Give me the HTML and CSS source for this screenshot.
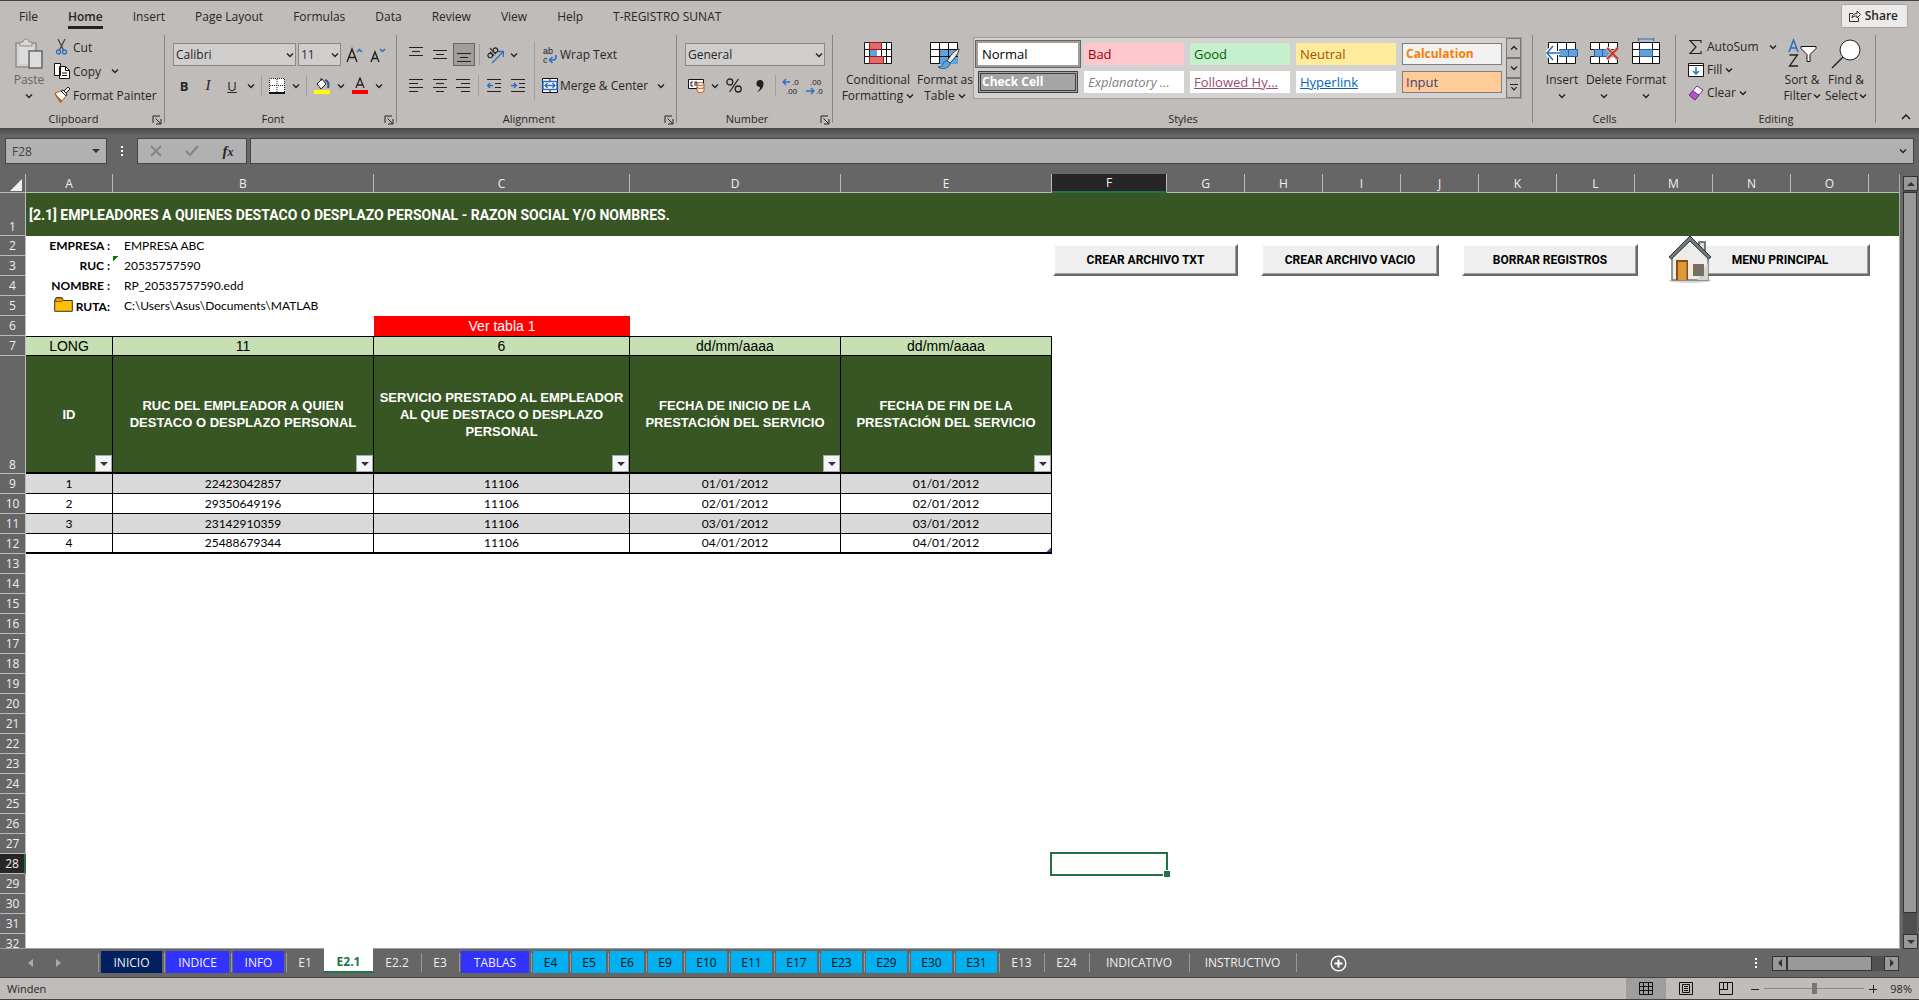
FILE: index.html
```html
<!DOCTYPE html>
<html lang="es">
<head>
    <meta charset="UTF-8">
    <meta name="viewport" content="width=device-width, initial-scale=1.0">
    <title>T-REGISTRO SUNAT</title>
    <link rel="stylesheet" href="styles.css">
</head>
<body>
    <svg class="defs" aria-hidden="true">
        <symbol id="chev" viewBox="0 0 8 8"><path d="M1 2.500l3 3 3-3" fill="none" stroke="#222" stroke-width="1.400"/></symbol>
        <symbol id="launch" viewBox="0 0 10 10"><path d="M1 8V1h7M3.500 3.500L8.500 8.500M9 4v5H4" fill="none" stroke="#222"/></symbol>
        <symbol id="tri" viewBox="0 0 8 8"><path d="M0 2h8L4 6z" fill="#333"/></symbol>
    </svg>

    <header class="ribbon">
        <!-- Pestañas -->
        <nav class="menu">
            <button>File</button>
            <button class="activo">Home</button>
            <button>Insert</button>
            <button>Page Layout</button>
            <button>Formulas</button>
            <button>Data</button>
            <button>Review</button>
            <button>View</button>
            <button>Help</button>
            <button>T-REGISTRO SUNAT</button>
            <button class="share"><svg width="12" height="12" viewBox="0 0 12 12" fill="none" stroke="#333"><path d="M4 3.500H.5v8h9V8M3 8c0-3 2-4.500 5-4.500V1l3.500 3.500L8 8V6C6 6 4 6 3 8z"/></svg>Share</button>
        </nav>

        <!-- Grupos de comandos -->
        <div class="grupos">
            <section class="grupo g-clipboard">
                <div class="cuerpo">
                    <button class="grande paste">
                        <svg width="30" height="34" viewBox="0 0 30 34"><path d="M2 5h20v24H2z" fill="#d2d0ce" stroke="#8f8f8f" stroke-width="1.500"/><path d="M5 8h14v18H5z" fill="#dedcda"/><path d="M6 4h3c0-4 6-4 6 0h3v4H6z" fill="#d8d8d8" stroke="#8f8f8f"/><path d="M15 13h13v17H15z" fill="#dcdcdc" stroke="#666" stroke-width="1.500"/></svg>
                        <span>Paste</span>
                        <svg class="chev"><use href="#chev"/></svg>
                    </button>
                    <div class="lista">
                        <button><svg width="16" height="16" viewBox="0 0 16 16" fill="none"><path d="M4 0l5.500 11M11 0L5.500 11" stroke="#444" stroke-width="1.300"/><circle cx="4.500" cy="13" r="2" stroke="#2b6cc4" stroke-width="1.300"/><circle cx="10.500" cy="13" r="2" stroke="#2b6cc4" stroke-width="1.300"/></svg>Cut</button>
                        <button><svg width="16" height="16" viewBox="0 0 16 16" fill="#fff" stroke="#111"><path d="M.5.5h6v12h-6zM5.500 3.500h6l4 4v8h-10z"/><path d="M11.500 3.500v4h4M8 10h5M8 12.500h5" fill="none"/></svg>Copy<svg class="chev ml"><use href="#chev"/></svg></button>
                        <button><svg width="16" height="16" viewBox="0 0 16 16"><path d="M1 6l6-2 5 5-5 6z" fill="#fff" stroke="#b65a1a"/><path d="M1 7l7 7-1.500 1.500z" fill="#c96a1e" stroke="#b65a1a"/><path d="M7 4l2-1 4 4-1 2zM10 4l4-4 2 2-4 4" fill="#eee" stroke="#222"/></svg>Format Painter</button>
                    </div>
                </div>
                <h2>Clipboard</h2><svg class="launch"><use href="#launch"/></svg>
            </section>

            <section class="grupo g-font">
                <div class="cuerpo filas">
                    <div class="fila">
                        <label class="combo fuente"><select aria-label="Font"><option>Calibri</option></select><svg class="chev"><use href="#chev"/></svg></label>
                        <label class="combo tam"><select aria-label="Font size"><option>11</option></select><svg class="chev"><use href="#chev"/></svg></label>
                        <button class="tool" aria-label="Increase font size"><svg width="18" height="16" viewBox="0 0 18 16" fill="none"><path d="M2 15L7 2l5 13M3.800 10.500h6.400" stroke="#222" stroke-width="1.400"/><path d="M12 5l2.500-2.500L17 5" stroke="#2b6cc4" stroke-width="1.500"/></svg></button>
                        <button class="tool" aria-label="Decrease font size"><svg width="18" height="16" viewBox="0 0 18 16" fill="none"><path d="M2 15L6 5l4 10M3.500 11.500h5" stroke="#222" stroke-width="1.400"/><path d="M11 2l2.500 2.500L16 2" stroke="#2b6cc4" stroke-width="1.500"/></svg></button>
                    </div>
                    <div class="fila">
                        <button class="tool"><b>B</b></button>
                        <button class="tool"><i>I</i></button>
                        <button class="tool"><u>U</u></button>
                        <svg class="chev"><use href="#chev"/></svg>
                        <span class="sep"></span>
                        <button class="tool" aria-label="Borders"><svg width="16" height="16" viewBox="0 0 16 16"><path d="M.5.5h15v15H.5z" fill="#fff"/><path d="M.5 15V.5h15V15M8 1v14M1 7.500h14" fill="none" stroke="#222" stroke-dasharray="1 1"/><path d="M0 15h16" stroke="#111" stroke-width="2"/></svg></button>
                        <svg class="chev"><use href="#chev"/></svg>
                        <span class="sep"></span>
                        <button class="tool" aria-label="Fill color"><svg width="16" height="17" viewBox="0 0 16 17"><path d="M7 1v3M3 7l5-5 4 5-5 5z" fill="#fff" stroke="#222"/><path d="M11 3c3 1 4 4 3 8" fill="none" stroke="#2b4f9a" stroke-width="2"/><path d="M0 13h16v4H0z" fill="#ff0"/></svg></button>
                        <svg class="chev"><use href="#chev"/></svg>
                        <button class="tool" aria-label="Font color"><svg width="16" height="17" viewBox="0 0 16 17"><path d="M4 11L8 1l4 10M5.300 8h5.400" fill="none" stroke="#222" stroke-width="1.300"/><path d="M0 13h16v4H0z" fill="#f00"/></svg></button>
                        <svg class="chev"><use href="#chev"/></svg>
                    </div>
                </div>
                <h2>Font</h2><svg class="launch"><use href="#launch"/></svg>
            </section>

            <section class="grupo g-align">
                <div class="cuerpo dividido">
                    <div class="filas">
                        <div class="fila">
                            <button class="tool" aria-label="Top align"><svg width="14" height="17" viewBox="0 0 14 17" stroke="#222"><path d="M0 1.500h14M3 5.500h8M0 9.500h14"/></svg></button>
                            <button class="tool" aria-label="Middle align"><svg width="14" height="17" viewBox="0 0 14 17" stroke="#222"><path d="M0 4.500h14M3 8.500h8M0 12.500h14"/></svg></button>
                            <button class="tool marcado" aria-label="Bottom align"><svg width="14" height="17" viewBox="0 0 14 17" stroke="#222"><path d="M0 7.500h14M3 11.500h8M0 15.500h14"/></svg></button>
                            <span class="sep"></span>
                            <button class="tool" aria-label="Orientation"><svg width="18" height="18" viewBox="0 0 18 18" fill="none"><g transform="rotate(-45 6 7)" stroke="#222" stroke-width="1.200"><circle cx="3" cy="7.500" r="2.300"/><path d="M5.500 5v5.500M8 2v8.500"/><circle cx="10.300" cy="7.500" r="2.300"/></g><path d="M6 17L17 6M12 5.500h5.500V11" stroke="#2b6cc4" stroke-width="1.300"/></svg></button>
                            <svg class="chev"><use href="#chev"/></svg>
                        </div>
                        <div class="fila">
                            <button class="tool" aria-label="Align left"><svg width="14" height="14" viewBox="0 0 14 14" stroke="#222"><path d="M0 .5h14M0 4.500h9M0 8.500h14M0 12.500h9"/></svg></button>
                            <button class="tool" aria-label="Center"><svg width="14" height="14" viewBox="0 0 14 14" stroke="#222"><path d="M0 .5h14M3 4.500h8M0 8.500h14M3 12.500h8"/></svg></button>
                            <button class="tool" aria-label="Align right"><svg width="14" height="14" viewBox="0 0 14 14" stroke="#222"><path d="M0 .5h14M5 4.500h9M0 8.500h14M5 12.500h9"/></svg></button>
                            <span class="sep"></span>
                            <button class="tool" aria-label="Decrease indent"><svg width="14" height="14" viewBox="0 0 14 14" fill="none" stroke="#222"><path d="M0 .5h14M8 4.500h6M8 8.500h6M0 12.500h14"/><path d="M6 6.500H1M3 4L.7 6.500 3 9" stroke="#2b6cc4" stroke-width="1.400"/></svg></button>
                            <button class="tool" aria-label="Increase indent"><svg width="14" height="14" viewBox="0 0 14 14" fill="none" stroke="#222"><path d="M0 .5h14M8 4.500h6M8 8.500h6M0 12.500h14"/><path d="M0 6.500h5M3 4l2.300 2.500L3 9" stroke="#2b6cc4" stroke-width="1.400"/></svg></button>
                        </div>
                    </div>
                    <div class="filas texto">
                        <button class="fila"><svg width="16" height="18" viewBox="0 0 16 18"><text x="1" y="8" font-size="9" fill="#222">ab</text><text x="1" y="17" font-size="9" fill="#222">c</text><path d="M14 9v2c0 2-1 3-3 3H8M10.500 11L7.500 14l3 3" fill="none" stroke="#2b6cc4" stroke-width="1.500"/></svg>Wrap Text</button>
                        <button class="fila"><svg width="16" height="16" viewBox="0 0 16 16"><path d="M.5.5h15v14H.5z" fill="#fff" stroke="#111"/><path d="M8 0v15" stroke="#111"/><path d="M1 3.500h14v8H1z" fill="#fff" stroke="#2b6cc4" stroke-width="1.400"/><path d="M3 7.500h10M5.500 5L3 7.500 5.500 10M10.500 5L13 7.500 10.500 10" fill="none" stroke="#2b6cc4" stroke-width="1.300"/></svg>Merge &amp; Center<svg class="chev ml"><use href="#chev"/></svg></button>
                    </div>
                </div>
                <h2>Alignment</h2><svg class="launch"><use href="#launch"/></svg>
            </section>

            <section class="grupo g-number">
                <div class="cuerpo filas">
                    <div class="fila">
                        <label class="combo formato"><select aria-label="Number format"><option>General</option></select><svg class="chev"><use href="#chev"/></svg></label>
                    </div>
                    <div class="fila">
                        <button class="tool" aria-label="Accounting format"><svg width="17" height="15" viewBox="0 0 17 15"><path d="M.5 1.500h15v9H.5z" fill="#fff" stroke="#111"/><path d="M5 4H3v4h2M9 8V4H7v4" fill="none" stroke="#111"/><path d="M9 6v7c0 2 7 2 7 0V6z" fill="#f6e8dc" stroke="#b65a1a"/><ellipse cx="12.500" cy="6" rx="3.500" ry="1.500" fill="#fff" stroke="#b65a1a"/><path d="M9 9c0 2 7 2 7 0" fill="none" stroke="#b65a1a"/></svg></button>
                        <svg class="chev"><use href="#chev"/></svg>
                        <button class="tool pct-b" aria-label="Percent"><svg width="16" height="15" viewBox="0 0 16 15" fill="none" stroke="#222" stroke-width="1.300"><circle cx="3.800" cy="4" r="3"/><circle cx="12.200" cy="11" r="3"/><path d="M12.500 1l-9 13"/></svg></button>
                        <button class="tool" aria-label="Comma style"><svg width="10" height="14" viewBox="0 0 10 14"><path d="M2 13c2.500-2 3-3.500 3-5a3.500 3.500 0 1 1 3.500-3.500C8.500 8 6 12 2 13z" fill="#222"/></svg></button>
                        <span class="sep"></span>
                        <button class="tool" aria-label="Increase decimal"><svg width="18" height="18" viewBox="0 0 18 18"><text x="10" y="8" font-size="8" fill="#222">.0</text><text x="4" y="17" font-size="8" fill="#222">.00</text><path d="M8 5H1M4 2L1 5l3 3" fill="none" stroke="#2b6cc4" stroke-width="1.300"/></svg></button>
                        <button class="tool" aria-label="Decrease decimal"><svg width="18" height="18" viewBox="0 0 18 18"><text x="4" y="8" font-size="8" fill="#222">.00</text><text x="10" y="17" font-size="8" fill="#222">.0</text><path d="M0 14h8M5 11l3 3-3 3" fill="none" stroke="#2b6cc4" stroke-width="1.300"/></svg></button>
                    </div>
                </div>
                <h2>Number</h2><svg class="launch"><use href="#launch"/></svg>
            </section>

            <section class="grupo g-styles">
                <div class="cuerpo">
                    <button class="grande ancho">
                        <svg width="28" height="34" viewBox="0 0 28 34"><path d="M.5 4.500h27v21H.5z" fill="#fff" stroke="#111"/><path d="M0 11.500h28M0 18.500h28M5.500 4v22M17.500 4v22M22.500 4v22" stroke="#111"/><path d="M5.500 4.500h12v7h-12zM5.500 18.500h14v7h-14z" fill="#dd6b6b" stroke="#a01818"/><path d="M6 12h7v6H6z" fill="#5fa3d8"/></svg>
                        <span>Conditional<br>Formatting <svg class="chev"><use href="#chev"/></svg></span>
                    </button>
                    <button class="grande">
                        <svg width="30" height="34" viewBox="0 0 30 34"><path d="M.5 4.500h27v21H.5z" fill="#fff" stroke="#111"/><path d="M10 11h18v15H10z" fill="#5fa3d8"/><path d="M0 11.500h28M0 18.500h28M9.500 4v22M18.500 4v22" stroke="#111"/><path d="M29 11c-4 1-9 7-12 12l3 2c4-4 9-10 9-14z" fill="#eee" stroke="#333"/><path d="M17 23c-5 0-3 6-9 6 4 3 12 2 12-4z" fill="#5fa3d8" stroke="#2b5fa8"/></svg>
                        <span>Format as<br>Table <svg class="chev"><use href="#chev"/></svg></span>
                    </button>
                    <div class="galeria">
                        <div class="estilos">
                            <button class="normal">Normal</button>
                            <button class="bad">Bad</button>
                            <button class="good">Good</button>
                            <button class="neutral">Neutral</button>
                            <button class="calculation">Calculation</button>
                            <button class="check">Check Cell</button>
                            <button class="explanatory">Explanatory ...</button>
                            <button class="followed">Followed Hy...</button>
                            <button class="hyper">Hyperlink</button>
                            <button class="input">Input</button>
                        </div>
                        <div class="flechas">
                            <button aria-label="Up"><svg class="chev arriba"><use href="#chev"/></svg></button>
                            <button aria-label="Down"><svg class="chev"><use href="#chev"/></svg></button>
                            <button class="mas" aria-label="More"><svg class="chev"><use href="#chev"/></svg></button>
                        </div>
                    </div>
                </div>
                <h2>Styles</h2>
            </section>

            <section class="grupo g-cells">
                <div class="cuerpo">
                    <button class="grande">
                        <svg width="32" height="34" viewBox="0 0 32 34"><path d="M2.500 4.500h27v21h-27z" fill="#fff" stroke="#111"/><path d="M11.500 4v22M20.500 4v22" stroke="#111"/><path d="M13.500 11.500h18v7h-18z" fill="#5fa3d8" stroke="#2b5fa8"/><path d="M22.500 12v6" stroke="#2b5fa8"/><path d="M14 15H1M7 8L1 15l6 7" fill="none" stroke="#fff" stroke-width="4"/><path d="M14 15H1M7 8L1 15l6 7" fill="none" stroke="#2b6cc4" stroke-width="1.600"/></svg>
                        <span>Insert</span>
                        <svg class="chev"><use href="#chev"/></svg>
                    </button>
                    <button class="grande">
                        <svg width="32" height="34" viewBox="0 0 32 34"><path d="M2.500 4.500h27v7h-27zM2.500 18.500h27v7h-27z" fill="#fff" stroke="#111"/><path d="M11.500 4v8M20.500 4v8M11.500 18v8M20.500 18v8" stroke="#111"/><path d="M6.500 11.500h16v7h-16z" fill="#5fa3d8" stroke="#2b5fa8"/><path d="M14.500 12v6" stroke="#2b5fa8"/><path d="M19 10l11 11M30 10L19 21" stroke="#c0bcb9" stroke-width="4"/><path d="M19 10l11 11M30 10L19 21" stroke="#d0342c" stroke-width="1.800"/></svg>
                        <span>Delete</span>
                        <svg class="chev"><use href="#chev"/></svg>
                    </button>
                    <button class="grande">
                        <svg width="32" height="34" viewBox="0 0 32 34"><path d="M2.500 4.500h27v21h-27z" fill="#fff" stroke="#111"/><path d="M2 11.500h28M2 18.500h28M9.500 4v22M22.500 4v22" stroke="#111"/><path d="M9.500 11.500h13v7h-13z" fill="#5fa3d8" stroke="#2b5fa8"/><path d="M8.500 1h15M8.500 0v3M23.500 0v3" stroke="#2b6cc4" stroke-width="1.200"/></svg>
                        <span>Format</span>
                        <svg class="chev"><use href="#chev"/></svg>
                    </button>
                </div>
                <h2>Cells</h2>
            </section>

            <section class="grupo g-editing">
                <div class="cuerpo">
                    <div class="lista corta">
                        <button><svg width="16" height="16" viewBox="0 0 16 16"><path d="M13 4V1.500H2L8 8l-6 6.500h11V12" fill="none" stroke="#222" stroke-width="1.200"/></svg>AutoSum<svg class="chev ml"><use href="#chev"/></svg></button>
                        <button><svg width="16" height="14" viewBox="0 0 16 14"><path d="M.5.5h15v13H.5z" fill="#fff" stroke="#111"/><path d="M0 2.500h16" stroke="#111"/><path d="M8 4v7M5 8l3 3 3-3" fill="none" stroke="#2b6cc4" stroke-width="1.500"/></svg>Fill <svg class="chev"><use href="#chev"/></svg></button>
                        <button><svg width="16" height="16" viewBox="0 0 16 16"><path d="M1 10l8-9 6 4-8 10z" fill="#fff" stroke="#7c2a8c"/><path d="M1 10l4-4 6 4-4 5z" fill="#b455c4" stroke="#7c2a8c"/></svg>Clear <svg class="chev"><use href="#chev"/></svg></button>
                    </div>
                    <button class="grande">
                        <svg width="30" height="34" viewBox="0 0 30 34" fill="none"><path d="M2 14L6.500 2 11 14M3.500 10h6" stroke="#2b6cc4" stroke-width="1.500"/><path d="M2.500 17h8l-8 11h8.500" stroke="#222" stroke-width="1.300"/><path d="M14 8.500h15v2l-6 6v7h-3v-7l-6-6z" fill="#fff" stroke="#111"/></svg>
                        <span>Sort &amp;<br>Filter<svg class="chev"><use href="#chev"/></svg></span>
                    </button>
                    <button class="grande">
                        <svg width="30" height="34" viewBox="0 0 30 34"><circle cx="19" cy="12" r="10" fill="#fff" stroke="#222"/><path d="M12 19L1 30" stroke="#222" stroke-width="1.500"/></svg>
                        <span>Find &amp;<br>Select<svg class="chev"><use href="#chev"/></svg></span>
                    </button>
                </div>
                <h2>Editing</h2>
            </section>
            <button class="colapsar" aria-label="Collapse"><svg width="10" height="7" viewBox="0 0 10 7"><path d="M1 6l4-4 4 4" fill="none" stroke="#111" stroke-width="1.300"/></svg></button>
        </div>
    </header>

    <!-- Barra de formulas -->
    <div class="formulas">
        <label class="celda"><input type="text" value="F28" aria-label="Name box"><svg width="8" height="8"><use href="#tri"/></svg></label>
        <span class="puntos"></span>
        <div class="fx">
            <button aria-label="Cancel"><svg width="12" height="12" viewBox="0 0 12 12"><path d="M1 1l10 10M11 1L1 11" stroke="#858585" stroke-width="1.800"/></svg></button>
            <button aria-label="Enter"><svg width="14" height="12" viewBox="0 0 14 12"><path d="M1 6l4 4 8-9" fill="none" stroke="#858585" stroke-width="2.200"/></svg></button>
            <button class="fn"><i>f<small>x</small></i></button>
        </div>
        <label class="entrada"><input type="text" aria-label="Formula bar"><svg class="chev"><use href="#chev"/></svg></label>
    </div>

    <main class="libro">
        <div class="hoja">
            <table>
                <colgroup>
                    <col class="c-num"><col class="c-a"><col class="c-b"><col class="c-c"><col class="c-d"><col class="c-d"><col class="c-f">
                    <col class="c-g"><col class="c-g"><col class="c-g"><col class="c-g"><col class="c-g"><col class="c-g"><col class="c-g"><col class="c-g"><col class="c-g"><col>
                </colgroup>
                <thead>
                    <tr>
                        <th class="esquina"><svg width="12" height="12" viewBox="0 0 12 12"><path d="M12 0v12H0z" fill="#f0f0f0"/></svg></th>
                        <th>A</th><th>B</th><th>C</th><th>D</th><th>E</th><th class="sel">F</th><th>G</th><th>H</th><th>I</th><th>J</th><th>K</th><th>L</th><th>M</th><th>N</th><th>O</th><th></th>
                    </tr>
                </thead>
                <tbody>
                    <tr class="titulo"><th>1</th><td colspan="16">[2.1] EMPLEADORES A QUIENES DESTACO O DESPLAZO PERSONAL - RAZON SOCIAL Y/O NOMBRES.</td></tr>
                    <tr class="dato"><th>2</th><td>EMPRESA :</td><td>EMPRESA ABC</td><td colspan="14"></td></tr>
                    <tr class="dato"><th>3</th><td>RUC :</td><td class="aviso">20535757590</td><td colspan="14"></td></tr>
                    <tr class="dato"><th>4</th><td>NOMBRE :</td><td>RP_20535757590.edd</td><td colspan="14"></td></tr>
                    <tr class="dato"><th>5</th><td><svg width="19" height="15" viewBox="0 0 19 15"><path d="M.7 3.500L2 .7h6l1.500 2.800h8.800v10.800H.7z" fill="#ffc000" stroke="#333"/><path d="M1 3.500L2 1h6l1 2.500-1 1H1z" fill="#f59b00" stroke="#5a3a00" stroke-width=".7"/></svg> RUTA:</td><td>C:\Users\Asus\Documents\MATLAB</td><td colspan="14"></td></tr>
                    <tr><th>6</th><td colspan="2"></td><td class="rojo">Ver tabla 1</td><td colspan="13"></td></tr>
                    <tr class="largo"><th>7</th><td>LONG</td><td>11</td><td>6</td><td>dd/mm/aaaa</td><td>dd/mm/aaaa</td><td colspan="11"></td></tr>
                    <tr class="cabecera">
                        <th>8</th>
                        <td>ID<button class="filtro" aria-label="Filtro"><svg width="8" height="8"><use href="#tri"/></svg></button></td>
                        <td>RUC DEL EMPLEADOR A QUIEN<br>DESTACO O DESPLAZO PERSONAL<button class="filtro" aria-label="Filtro"><svg width="8" height="8"><use href="#tri"/></svg></button></td>
                        <td>SERVICIO PRESTADO AL EMPLEADOR<br>AL QUE DESTACO O DESPLAZO<br>PERSONAL<button class="filtro" aria-label="Filtro"><svg width="8" height="8"><use href="#tri"/></svg></button></td>
                        <td>FECHA DE INICIO DE LA<br>PRESTACIÓN DEL SERVICIO<button class="filtro" aria-label="Filtro"><svg width="8" height="8"><use href="#tri"/></svg></button></td>
                        <td>FECHA DE FIN DE LA<br>PRESTACIÓN DEL SERVICIO<button class="filtro" aria-label="Filtro"><svg width="8" height="8"><use href="#tri"/></svg></button></td>
                        <td colspan="11"></td>
                    </tr>
                    <tr class="reg gris"><th>9</th><td>1</td><td>22423042857</td><td>11106</td><td>01/01/2012</td><td>01/01/2012</td><td colspan="11"></td></tr>
                    <tr class="reg"><th>10</th><td>2</td><td>29350649196</td><td>11106</td><td>02/01/2012</td><td>02/01/2012</td><td colspan="11"></td></tr>
                    <tr class="reg gris"><th>11</th><td>3</td><td>23142910359</td><td>11106</td><td>03/01/2012</td><td>03/01/2012</td><td colspan="11"></td></tr>
                    <tr class="reg ultimo"><th>12</th><td>4</td><td>25488679344</td><td>11106</td><td>04/01/2012</td><td>04/01/2012</td><td colspan="11"></td></tr>
                    <tr><th>13</th><td colspan="16"></td></tr>
                    <tr><th>14</th><td colspan="16"></td></tr>
                    <tr><th>15</th><td colspan="16"></td></tr>
                    <tr><th>16</th><td colspan="16"></td></tr>
                    <tr><th>17</th><td colspan="16"></td></tr>
                    <tr><th>18</th><td colspan="16"></td></tr>
                    <tr><th>19</th><td colspan="16"></td></tr>
                    <tr><th>20</th><td colspan="16"></td></tr>
                    <tr><th>21</th><td colspan="16"></td></tr>
                    <tr><th>22</th><td colspan="16"></td></tr>
                    <tr><th>23</th><td colspan="16"></td></tr>
                    <tr><th>24</th><td colspan="16"></td></tr>
                    <tr><th>25</th><td colspan="16"></td></tr>
                    <tr><th>26</th><td colspan="16"></td></tr>
                    <tr><th>27</th><td colspan="16"></td></tr>
                    <tr><th class="sel">28</th><td colspan="5"></td><td class="activa"></td><td colspan="10"></td></tr>
                    <tr><th>29</th><td colspan="16"></td></tr>
                    <tr><th>30</th><td colspan="16"></td></tr>
                    <tr><th>31</th><td colspan="16"></td></tr>
                    <tr><th>32</th><td colspan="16"></td></tr>
                </tbody>
            </table>

            <!-- Botones de macro sobre la hoja -->
            <div class="macros">
                <button class="m1">CREAR ARCHIVO TXT</button>
                <button class="m2">CREAR ARCHIVO VACIO</button>
                <button class="m3">BORRAR REGISTROS</button>
                <button class="m4">MENU PRINCIPAL</button>
                <svg class="casa" width="44" height="48" viewBox="0 0 44 48">
                    <ellipse cx="22" cy="45.500" rx="21" ry="2.500" fill="#d5d5d5"/>
                    <path d="M31 7h6v14h-6z" fill="#ddd" stroke="#555" stroke-width="1.500"/>
                    <path d="M4 22L22 4l18 18v23H4z" fill="#ecece8" stroke="#777" stroke-width="1.500"/>
                    <path d="M29 45h11V28z" fill="#d2d6cc"/>
                    <path d="M1 22L22 1l21 21-2.500 2L22 6 3.500 24z" fill="#70787c" stroke="#2f3437"/>
                    <path d="M8 25h12v20H8z" fill="#8a4f0e"/><path d="M10 27h8.500v18H10z" fill="#dd9838"/>
                    <path d="M25 29h11v12H25z" fill="#a5661a"/><path d="M26.500 30.500h3.500v4h-3.500zM31.500 30.500H35v4h-3.500zM26.500 36H30v3.500h-3.500zM31.500 36H35v3.500h-3.500z" fill="#3f78c4"/>
                </svg>
            </div>
        </div>
        <div class="scroll-v">
            <button aria-label="Subir"><svg class="arriba" width="8" height="8"><use href="#tri"/></svg></button>
            <div class="pista"><div class="barra"></div></div>
            <button aria-label="Bajar"><svg width="8" height="8"><use href="#tri"/></svg></button>
        </div>
    </main>

    <!-- Pestañas de hojas -->
    <div class="hojas">
        <div class="nav">
            <svg width="5" height="8" viewBox="0 0 5 8"><path d="M5 0v8L0 4z" fill="#aaa"/></svg>
            <svg width="5" height="8" viewBox="0 0 5 8"><path d="M0 0v8l5-4z" fill="#aaa"/></svg>
        </div>
        <div class="tabs">
            <button class="marino">INICIO</button>
            <button class="azul">INDICE</button>
            <button class="azul">INFO</button>
            <button class="previa">E1</button>
            <button class="actual">E2.1</button>
            <button>E2.2</button>
            <button>E3</button>
            <button class="azul">TABLAS</button>
            <button class="cielo">E4</button>
            <button class="cielo">E5</button>
            <button class="cielo">E6</button>
            <button class="cielo">E9</button>
            <button class="cielo">E10</button>
            <button class="cielo">E11</button>
            <button class="cielo">E17</button>
            <button class="cielo">E23</button>
            <button class="cielo">E29</button>
            <button class="cielo">E30</button>
            <button class="cielo">E31</button>
            <button>E13</button>
            <button>E24</button>
            <button>INDICATIVO</button>
            <button>INSTRUCTIVO</button>
        </div>
        <button class="nueva" aria-label="Nueva hoja"><svg width="17" height="17" viewBox="0 0 17 17"><circle cx="8.500" cy="8.500" r="7.300" fill="none" stroke="#fff" stroke-width="1.400"/><path d="M8.500 4.500v8M4.500 8.500h8" stroke="#fff" stroke-width="2"/></svg></button>
        <span class="puntos"></span>
        <div class="scroll-h">
            <button aria-label="Izquierda"><svg class="izq" width="8" height="8"><use href="#tri"/></svg></button>
            <div class="pista"><div class="barra"></div></div>
            <button aria-label="Derecha"><svg class="der" width="8" height="8"><use href="#tri"/></svg></button>
        </div>
    </div>

    <footer class="estado">
        <span class="nombre">Winden</span>
        <button class="vista activa-v" aria-label="Normal"><svg width="14" height="14" viewBox="0 0 14 14" fill="none" stroke="#111"><path d="M.5.5h13v12H.5zM0 4.500h14M0 8.500h14M4.500 0v13M9.500 0v13"/></svg></button>
        <button class="vista" aria-label="Page layout"><svg width="14" height="14" viewBox="0 0 14 14" fill="none" stroke="#111"><path d="M.5.5h13v12H.5zM3.500 2.500h7v8h-7zM5 4.500h4M5 6.500h4M5 8.500h4"/></svg></button>
        <button class="vista" aria-label="Page break"><svg width="14" height="14" viewBox="0 0 14 14" fill="none" stroke="#111"><path d="M.5.5h13v12H.5zM4.500 0v7.500h4V0M0 7.500h9"/></svg></button>
        <button class="zoom-b" aria-label="Zoom out"><svg width="8" height="8" viewBox="0 0 8 8"><path d="M0 4.500h8" stroke="#222"/></svg></button>
        <input type="range" min="0" max="100" value="50" aria-label="Zoom">
        <button class="zoom-b" aria-label="Zoom in"><svg width="8" height="8" viewBox="0 0 8 8"><path d="M0 4.500h8M4.500 0v8" stroke="#222"/></svg></button>
        <span class="pct">98%</span>
    </footer>
</body>
</html>
```
FILE: styles.css
```css
* {
    box-sizing: border-box;
}
body {
    margin: 0;
    height: 100vh;
    display: flex;
    flex-direction: column;
    overflow: hidden;
    background: #666;
    color: #262626;
    font-family: "Open Sans", "Noto Sans", sans-serif;
    font-size: 12px;
}
button {
    font: inherit;
    color: inherit;
    background: none;
    border: 0;
    padding: 0;
    white-space: nowrap;
}
svg {
    flex: none;
}
svg text {
    font-family: "Liberation Sans", sans-serif;
}
input, select {
    font: inherit;
    color: inherit;
}
.defs {
    display: none;
}
.chev {
    width: 8px;
    height: 8px;
}
.ml {
    margin-left: 7px;
}

/* Cinta */
.ribbon {
    background: #c0bcb9;
    border-top: 1px solid #444;
}
.menu {
    display: flex;
    height: 32px;
    padding-left: 4px;
}
.menu button {
    padding: 0 15px;
    line-height: 32px;
}
.menu .activo {
    font-weight: 600;
    position: relative;
}
.menu .activo::after {
    content: "";
    position: absolute;
    left: 15px;
    right: 15px;
    bottom: 4px;
    height: 3px;
    background: #222;
}
.menu .share {
    display: flex;
    align-items: center;
    gap: 4px;
    margin: 3px 11px 0 auto;
    height: 24px;
    line-height: 20px;
    padding: 0 9px 0 7px;
    font-weight: 600;
    background: #edebe9;
    border: 1px solid #a8a5a3;
    border-radius: 2px;
}
.grupos {
    display: flex;
    height: 95px;
    padding-top: 2px;
    position: relative;
}
.grupo {
    position: relative;
    display: flex;
    flex-direction: column;
    background: linear-gradient(#868482, #868482) right top / 1px 88px no-repeat;
}
.grupo h2 {
    margin: 0;
    font-size: 11px;
    font-weight: 400;
    line-height: 16px;
    text-align: center;
}
.g-clipboard h2 {
    padding-right: 18px;
}
.g-font h2, .g-align h2, .g-number h2 {
    padding-right: 16px;
}
.launch {
    position: absolute;
    right: 3px;
    bottom: 3px;
    width: 10px;
    height: 10px;
}
.g-clipboard { width: 165px; }
.g-font { width: 232px; }
.g-align { width: 280px; }
.g-number { width: 156px; }
.g-styles { width: 700px; }
.g-cells { width: 143px; }
.g-editing { width: 200px; }
.cuerpo {
    display: flex;
    height: 76px;
}
.filas {
    display: flex;
    flex-direction: column;
    gap: 8px;
    padding: 8px 0 0 8px;
}
.fila {
    display: flex;
    align-items: center;
    height: 23px;
    gap: 2px;
}
.fila > .chev {
    margin: 0 2px;
}
.tool {
    display: flex;
    align-items: center;
    justify-content: center;
    width: 22px;
    height: 23px;
    font-size: 13px;
}
.tool i {
    font-family: "Liberation Serif", serif;
    font-size: 15px;
}
.marcado {
    background: #a09e9c;
    border: 1px solid #666;
}
.sep {
    width: 1px;
    height: 21px;
    margin: 0 2px;
    background: #a19e9c;
}
.combo {
    position: relative;
    display: block;
    height: 23px;
}
.combo select {
    appearance: none;
    width: 100%;
    height: 23px;
    padding: 0 2px;
    background: #d0cecd;
    border: 1px solid #8a8886;
    border-radius: 0;
}
.combo .chev {
    position: absolute;
    right: 2px;
    top: 8px;
}
.fuente { width: 123px; }
.tam { width: 43px; }
.formato { width: 140px; }
.tam select {
    color: #3b1d4a;
}
.pct-b {
    margin-right: 2px;
}
.lista {
    display: flex;
    flex-direction: column;
}
.lista button {
    display: flex;
    align-items: center;
    gap: 3px;
    height: 24px;
}
.lista.corta {
    width: 104px;
    padding-left: 12px;
}
.lista.corta button {
    height: 23px;
}
.grande {
    display: flex;
    flex-direction: column;
    align-items: center;
    width: 42px;
    padding-top: 3px;
    line-height: 16px;
}
.grande > .chev {
    margin-top: 4px;
}
.g-editing .grande {
    width: 44px;
}
.g-editing span .chev {
    margin-left: 1px;
}
.paste {
    margin-left: 8px;
    color: #666;
}
.paste + .lista {
    margin-left: 4px;
}
.g-align .fila + .fila .ml {
    margin-left: 7px;
}
.dividido .filas {
    padding-left: 8px;
}
.dividido .texto {
    margin: 0 0 0 5px;
    background: linear-gradient(#a19e9c, #a19e9c) left 6px / 1px 59px no-repeat;
}
.g-align .filas:first-child {
    width: 132px;
}

/* Galeria de estilos */
.g-styles .grande {
    width: 68px;
}
.g-styles .ancho {
    margin: 0 0 0 11px;
}
.galeria {
    display: flex;
    width: 549px;
    height: 62px;
    margin: 2px 0 0 -5px;
    background: #d3d2d1;
    border: 1px solid #a19e9c;
    font-size: 13px;
}
.g-styles .cuerpo {
    padding-right: 11px;
    justify-content: space-between;
}
.estilos {
    display: grid;
    grid-template-columns: repeat(5, 100px);
    grid-template-rows: 22px 22px;
    gap: 6px;
    padding: 5px 4px;
    flex: 1;
}
.estilos button {
    padding: 0 4px;
    text-align: left;
    line-height: 20px;
    background: #fff;
}
.estilos .normal {
    color: #000;
    outline: 2px solid #a09e9c;
    box-shadow: 0 0 0 3px #666;
}
.estilos .bad {
    background: #ffc7ce;
    color: #9c0006;
}
.estilos .good {
    background: #c6efce;
    color: #006100;
}
.estilos .neutral {
    background: #ffeb9c;
    color: #9c5700;
}
.estilos .calculation {
    background: #f2f2f2;
    border: 1px solid #7f7f7f;
    color: #fa7d00;
    font-size: 12px;
    font-weight: 700;
    padding: 0 3px;
}
.estilos .check {
    background: #a5a5a5;
    border: 3px double #3f3f3f;
    color: #fff;
    font-size: 12px;
    font-weight: 700;
    padding: 0 1px;
    line-height: 14px;
}
.estilos .explanatory {
    color: #7f7f7f;
    font-style: italic;
}
.estilos .followed {
    color: #954f72;
    text-decoration: underline;
}
.estilos .hyper {
    color: #0563c1;
    text-decoration: underline;
}
.estilos .input {
    background: #ffcc99;
    border: 1px solid #7f7f7f;
    color: #3f3f76;
    padding: 0 3px;
}
.flechas {
    display: grid;
    grid-template-rows: 20px 20px 20px;
    width: 15px;
}
.flechas button {
    display: flex;
    align-items: center;
    justify-content: center;
    background: #c0bcb9;
    border: 1px solid #777;
}
.flechas .mas .chev {
    border-top: 1px solid #222;
}
.arriba {
    transform: rotate(180deg);
}
.izq {
    transform: rotate(90deg);
}
.der {
    transform: rotate(-90deg);
}
.g-cells .cuerpo {
    padding-left: 8px;
}
.colapsar {
    margin: auto 8px 4px auto;
}

/* Barra de formulas */
.formulas {
    display: flex;
    height: 46px;
    padding: 10px 5px;
    background: linear-gradient(#484848, #666 8px);
}
.formulas .celda, .formulas .fx, .formulas .entrada {
    position: relative;
    height: 26px;
    background: #b1b1b1;
    border: 1px solid #444;
}
.formulas input {
    width: 100%;
    height: 24px;
    padding: 0 6px;
    background: none;
    border: 0;
    color: #444;
}
.formulas .celda {
    width: 102px;
}
.formulas .celda svg, .entrada .chev {
    position: absolute;
    right: 6px;
    top: 8px;
}
.puntos {
    width: 2px;
    height: 11px;
    background: repeating-linear-gradient(#fff 0 2px, transparent 2px 4px);
}
.formulas .puntos {
    margin: 8px 14px;
}
.formulas .fx {
    display: grid;
    grid-template-columns: repeat(3, 1fr);
    width: 110px;
    margin-right: 3px;
}
.fx button {
    display: flex;
    align-items: center;
    justify-content: center;
}
.fx .fn {
    font: bold 15px "Liberation Serif", serif;
}
.fn small {
    font-size: 12px;
}
.formulas .entrada {
    flex: 1;
}

/* Hoja */
.libro {
    flex: 1;
    min-height: 0;
    display: flex;
}
.hoja {
    flex: 1;
    position: relative;
    overflow: hidden;
    background: #fff;
    border-bottom: 1px solid #a0a0a0;
}
table {
    width: 100%;
    table-layout: fixed;
    border-collapse: separate;
    border-spacing: 0;
    font-family: Lato, sans-serif;
    font-size: 12px;
    color: #000;
}
.c-num { width: 26px; }
.c-a { width: 87px; }
.c-b { width: 261px; }
.c-c { width: 256px; }
.c-d { width: 211px; }
.c-f { width: 115px; }
.c-g { width: 78px; }
th, td {
    height: 20px;
    padding: 0;
    line-height: 16px;
}
th {
    background: #666;
    color: #f0f0f0;
    font-family: "Open Sans", "Noto Sans", sans-serif;
    font-size: 12px;
    font-weight: 400;
    border-right: 1px solid #bbb;
    border-bottom: 1px solid #bbb;
}
tbody th {
    padding-top: 1px;
}
thead th {
    height: 19px;
    padding-top: 1px;
}
thead th:last-child {
    border-right: 0;
}
thead .sel {
    background: #262626;
    border-bottom: 2px solid #217346;
}
tbody .sel {
    background: #262626;
    border-right: 2px solid #217346;
}
.esquina {
    text-align: right;
}
.esquina svg {
    display: block;
    margin: 2px 3px 0 auto;
}
.titulo th, .titulo td {
    height: 43px;
}
.titulo th, .cabecera th {
    vertical-align: bottom;
}
.titulo td {
    background: #375623;
    color: #fff;
    font: bold 14px Roboto, sans-serif;
    padding-left: 3px;
    white-space: nowrap;
}
.dato td:nth-child(2) {
    text-align: right;
    font-weight: 700;
    padding-right: 3px;
    white-space: nowrap;
}
.dato td:nth-child(2) svg {
    vertical-align: -1px;
}
.dato td:nth-child(3) {
    padding-left: 11px;
}
.aviso {
    background: linear-gradient(135deg, #008000 4px, transparent 4px);
}
.rojo {
    background: #f00;
    color: #fff;
    text-align: center;
    font-family: "Liberation Sans", sans-serif;
    font-size: 14px;
}
.largo td, .cabecera td, .reg td {
    text-align: center;
}
.largo td:not(:last-child) {
    background: #c6e0b4;
    border-top: 1px solid #000;
    border-bottom: 1px solid #000;
    border-right: 1px solid #000;
    font-family: "Liberation Sans", sans-serif;
    font-size: 14px;
}
.cabecera td {
    height: 118px;
    position: relative;
}
.cabecera td:not(:last-child) {
    background: #375623;
    color: #fff;
    border-right: 1px solid #000;
    border-bottom: 2px solid #000;
    font-family: "Liberation Sans", sans-serif;
    font-size: 13px;
    font-weight: 700;
    line-height: 17px;
}
.filtro {
    position: absolute;
    right: 0;
    bottom: 0;
    width: 17px;
    height: 17px;
    background: #f4f5f8;
    border: 1px solid #aaa;
    line-height: 8px;
}
.reg td:not(:last-child) {
    border-right: 1px solid #000;
    border-bottom: 1px solid #000;
}
.gris td:not(:last-child) {
    background: #d9d9d9;
}
.ultimo td:not(:last-child) {
    border-bottom: 2px solid #000;
}
.ultimo td:nth-child(6) {
    background: linear-gradient(-45deg, #3a4a9f 3px, transparent 3px);
}
.activa {
    position: relative;
}
.activa::before {
    content: "";
    position: absolute;
    inset: -2px -1px -2px -2px;
    border: 2px solid #217346;
}
.activa::after {
    content: "";
    position: absolute;
    right: -3px;
    bottom: -3px;
    width: 6px;
    height: 6px;
    background: #217346;
    border: 1px solid #fff;
    border-width: 1px 0 0 1px;
}

.macros {
    position: absolute;
    top: 70px;
    left: 1053px;
    display: flex;
    gap: 23px;
}
.macros button {
    height: 32px;
    background: #efefef;
    border: 2px solid #696969;
    border-top-color: #fff;
    border-left-color: #fff;
    box-shadow: inset -1px -1px #a0a0a0;
    color: #000;
    font: bold 12px Roboto, sans-serif;
}
.m1 { width: 185px; }
.m2 { width: 178px; }
.m3 { width: 176px; }
.macros .m4 {
    width: 180px;
    margin-left: 29px;
}
.casa {
    position: absolute;
    right: 158px;
    top: -9px;
}

/* Barras de desplazamiento */
.scroll-v {
    display: flex;
    flex-direction: column;
    width: 20px;
    padding: 2px 2px 0 3px;
    border-left: 1px solid #aaa;
}
.scroll-v button, .scroll-h button {
    display: flex;
    align-items: center;
    justify-content: center;
    width: 15px;
    height: 15px;
    background: #999;
    border: 1px solid #333;
}
.pista {
    flex: 1;
    background: #505050;
}
.barra {
    background: #999;
    border: 1px solid #333;
}
.scroll-v .barra {
    height: 97%;
    margin-top: 1px;
}
.hojas {
    display: flex;
    align-items: center;
    height: 29px;
    padding-right: 20px;
    border-bottom: 1px solid #444;
    color: #f0f0f0;
}
.nav {
    display: flex;
    gap: 23px;
    width: 98px;
    padding-left: 28px;
}
.tabs {
    display: grid;
    grid-template-columns: 65px 67px 55px 38px 49px 48px 38px 72px 39px 38px 38px 38px repeat(9, 45px) 100px 107px;
    height: 28px;
    padding-left: 1px;
    background: linear-gradient(#999, #999) left 4px / 1px 19px no-repeat;
}
.tabs button {
    height: 22px;
    margin: 2px 2px 0;
    position: relative;
}
.tabs button::after {
    content: "";
    position: absolute;
    right: -3px;
    top: 2px;
    height: 19px;
    width: 1px;
    background: #999;
}
.marino { background: #002060; }
.azul { background: #3333ff; }
.cielo {
    background: #00b0f0;
    color: #111;
}
.tabs .actual {
    height: 25px;
    margin: -1px 0 0;
    padding-top: 3px;
    background: #fff;
    color: #217346;
    font-weight: 700;
    border-bottom: 2px solid #217346;
}
.tabs .actual::after, .tabs .previa::after {
    display: none;
}
.nueva {
    display: flex;
    margin: 0 auto 0 34px;
}
.hojas .puntos {
    margin-right: 15px;
}
.scroll-h {
    display: flex;
    width: 127px;
}
.scroll-h .pista {
    display: flex;
}
.scroll-h .barra {
    width: 88%;
}

/* Barra de estado */
.estado {
    display: flex;
    align-items: center;
    height: 22px;
    padding: 0 7px;
    background: #c0bcb9;
    border-bottom: 1px solid #444;
    font-size: 11px;
}
.estado .nombre {
    margin-right: auto;
}
.vista {
    display: flex;
    align-items: center;
    justify-content: center;
    width: 40px;
    height: 21px;
}
.activa-v {
    background: #a09e9c;
}
.zoom-b {
    display: flex;
    margin: 0 5px;
}
.estado input {
    appearance: none;
    width: 100px;
    height: 10px;
    margin: 0;
    background: linear-gradient(#888, #888) center / 100% 1px no-repeat;
}
.estado input::-webkit-slider-thumb {
    appearance: none;
    width: 5px;
    height: 11px;
    background: #777;
}
.pct {
    width: 30px;
    text-align: right;
}
```
